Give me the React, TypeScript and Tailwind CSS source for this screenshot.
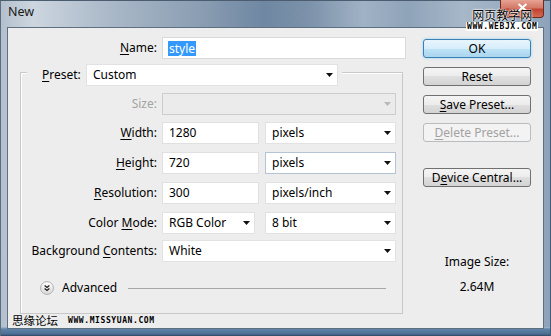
import React from "react";

function Arrow({ disabled }: { disabled?: boolean }) {
  return (
    <svg width="7" height="4" viewBox="0 0 7 4" className="shrink-0">
      <path d="M0 0H7L3.5 4Z" fill={disabled ? "#b8b8b8" : "#111"} />
    </svg>
  );
}

function Select({
  value,
  className = "",
  disabled,
  focus,
}: {
  value?: string;
  className?: string;
  disabled?: boolean;
  focus?: boolean;
}) {
  const cls = disabled
    ? "bg-[#ebebeb] border-[#cdcdcd]"
    : focus
    ? "bg-white border-[#b4c4d4]"
    : "bg-white border-[#e2e2e2]";
  return (
    <div className={`h-[22px] flex items-center justify-between pl-[6px] pr-[4px] border ${cls} ${className}`}>
      <span className="leading-none">{value}</span>
      <Arrow disabled={disabled} />
    </div>
  );
}

function Input({ value, className = "" }: { value: string; className?: string }) {
  return (
    <div className={`h-[22px] flex items-center pl-[6px] bg-white border border-[#e0e0e0] ${className}`}>
      <span className="leading-none">{value}</span>
    </div>
  );
}

function Label({ children, disabled }: { children: React.ReactNode; disabled?: boolean }) {
  return (
    <div className={`w-[136px] shrink-0 text-right leading-none ${disabled ? "text-[#a3a3a3]" : "text-black"}`}>
      {children}
    </div>
  );
}

function U({ children }: { children: React.ReactNode }) {
  return <span className="underline underline-offset-[2px] decoration-1">{children}</span>;
}

function Button({
  children,
  variant = "normal",
  className = "",
}: {
  children: React.ReactNode;
  variant?: "normal" | "default" | "disabled";
  className?: string;
}) {
  const cls =
    variant === "default"
      ? "border-[#3c7fb1] bg-[linear-gradient(#e9f5fc_0%,#d6eefb_50%,#bfe3f6_50%,#a9d6ef_100%)] shadow-[0_0_3px_#8fd0f2] text-black"
      : variant === "disabled"
      ? "border-[#b8bcbf] bg-[#f3f3f3] text-[#a2a2a2]"
      : "border-[#707070] bg-[linear-gradient(#f4f4f4_0%,#ececec_50%,#dfdfdf_50%,#d3d3d3_100%)] text-black";
  return (
    <div
      className={`w-[108px] h-[19px] rounded-[3px] border flex items-center justify-center leading-none ${cls} ${className}`}
    >
      {children}
    </div>
  );
}

function AdvancedIcon() {
  return (
    <svg width="14" height="14" viewBox="0 0 14 14" className="shrink-0">
      <defs>
        <linearGradient id="ag" x1="0" y1="0" x2="0" y2="1">
          <stop offset="0" stopColor="#ffffff" />
          <stop offset="1" stopColor="#d9d9d9" />
        </linearGradient>
      </defs>
      <circle cx="7" cy="7" r="6.4" fill="url(#ag)" stroke="#a8a8a8" strokeWidth="0.9" />
      <path d="M4.6 4.4L7 6.4L9.4 4.4M4.6 7.4L7 9.4L9.4 7.4" fill="none" stroke="#222" strokeWidth="1.3" />
    </svg>
  );
}

export default function App() {
  return (
    <div
      className="relative w-[551px] h-[336px] overflow-hidden pt-0 px-[7px] pb-[8px] flex flex-col font-['Noto_Sans',sans-serif] text-[12px] text-black bg-[linear-gradient(to_bottom,transparent_327px,#a9c0d6_327px,#5f84a8_329px,#4b6f93_334px,#2c4662_336px),linear-gradient(90deg,#b2bfcc_0%,#cdd6df_6%,#aebccb_18%,#8b9eb3_36%,#6f87a2_48%,#7c92aa_56%,#a0b2c5_66%,#8fa3b9_74%,#a6b7c8_84%,#8ea3b9_100%)] shadow-[inset_0_1px_0_#4d5d70,inset_1px_0_0_#5d6d80,inset_-1px_0_0_#3d5a78]"
    >
      {/* Title bar */}
      <div className="h-[27px] shrink-0 flex items-start justify-between">
        <div className="pt-[6px] pl-[1px] text-[12.5px] leading-none text-[#1a1a1a]">New</div>
        <div className="w-[44px] h-[18px] rounded-b-[4px] border border-t-0 border-[#6b2a22] bg-[linear-gradient(#e6a394_0%,#d47a68_45%,#c2432f_55%,#d46a50_100%)] flex items-start justify-center">
          <svg width="11" height="9" viewBox="0 0 11 9" className="mt-[3px]">
            <path d="M1.5 1L9.5 8M9.5 1L1.5 8" stroke="#fff" strokeWidth="2" />
          </svg>
        </div>
      </div>

      {/* Client area */}
      <div className="flex-1 flex border border-[#5e6f82] bg-[#ededed]">
        {/* Left column */}
        <div className="w-[415px] shrink-0 flex flex-col">
          {/* Name */}
          <div className="mt-[9px] flex items-center">
            <div className="w-[149px] text-right leading-none">
              <U>N</U>ame:
            </div>
            <div className="ml-[5px] w-[244px] h-[22px] bg-white border border-[#dadada] flex items-center pl-[5px]">
              <span className="bg-[#3399ff] text-white leading-[15px] px-[1px]">style</span>
            </div>
          </div>

          {/* Group box */}
          <div className="mt-[13px] ml-[12px] w-[383px] h-[242px] border border-[#c9c9c9] shadow-[inset_1px_1px_0_#ffffff] flex flex-col">
            {/* Legend row */}
            <div className="-mt-[9px] ml-[6px] w-[315px] bg-[#ededed] flex items-center">
              <div className="w-[59px] pl-[15px] leading-none">
                <U>P</U>reset:
              </div>
              <Select value="Custom" className="w-[252px]" />
            </div>

            <div className="mt-[7px] flex items-center">
              <Label disabled>Size:</Label>
              <Select disabled className="ml-[5px] w-[234px]" />
            </div>

            <div className="mt-[7px] flex items-center">
              <Label>
                <U>W</U>idth:
              </Label>
              <Input value="1280" className="ml-[5px] w-[97px]" />
              <Select value="pixels" className="ml-[6px] w-[131px]" />
            </div>

            <div className="mt-[8px] flex items-center">
              <Label>
                <U>H</U>eight:
              </Label>
              <Input value="720" className="ml-[5px] w-[97px]" />
              <Select value="pixels" focus className="ml-[6px] w-[131px]" />
            </div>

            <div className="mt-[8px] flex items-center">
              <Label>
                <U>R</U>esolution:
              </Label>
              <Input value="300" className="ml-[5px] w-[97px]" />
              <Select value="pixels/inch" className="ml-[6px] w-[131px]" />
            </div>

            <div className="mt-[8px] flex items-center">
              <Label>
                Color <U>M</U>ode:
              </Label>
              <Select value="RGB Color" className="ml-[5px] w-[93px]" />
              <Select value="8 bit" className="ml-[10px] w-[131px]" />
            </div>

            <div className="mt-[6px] flex items-center">
              <Label>
                Background <U>C</U>ontents:
              </Label>
              <Select value="White" className="ml-[5px] w-[234px]" />
            </div>

            <div className="mt-[15px] h-[22px] flex items-center pl-[19px] pr-[16px]">
              <AdvancedIcon />
              <span className="ml-[8px] leading-none">Advanced</span>
              <div className="ml-[11px] flex-1 h-px bg-[#a6a6a6]" />
            </div>
          </div>

          {/* bottom watermark */}
          <div className="h-[14px] flex items-center pl-[4px]">
            <span className="font-['Noto_Sans_CJK_SC',sans-serif] text-[11.5px] leading-none text-black">思缘论坛</span>
            <span className="ml-[10px] font-['DejaVu_Sans_Mono',monospace] font-bold text-[8px] tracking-[0.6px] leading-none text-black">
              WWW.MISSYUAN.COM
            </span>
          </div>
        </div>

        {/* Right column */}
        <div className="flex-1 flex flex-col">
          <div className="mt-[11px] flex flex-col gap-[9px]">
            <Button variant="default">OK</Button>
            <Button>Reset</Button>
            <Button>
              <U>S</U>ave Preset...
            </Button>
            <Button variant="disabled">
              <U>D</U>elete Preset...
            </Button>
          </div>
          <Button className="mt-[26px]">
            D<U>e</U>vice Central...
          </Button>
          <div className="mt-[67px] w-[108px] text-center leading-[16px]">Image Size:</div>
          <div className="mt-[9px] w-[108px] text-center leading-[16px]">2.64M</div>
        </div>
      </div>

      {/* title watermark overlay */}
      <div className="absolute left-[466px] top-[8px] flex flex-col items-center">
        <span className="font-['Noto_Sans_CJK_SC',sans-serif] text-[12px] leading-[13px] text-black [text-shadow:0_0_2px_#fff,0_0_2px_#fff,0_0_1px_#fff]">
          网页教学网
        </span>
        <span className="mt-[1px] bg-white px-[1px] font-['DejaVu_Sans_Mono',monospace] font-bold text-[8px] tracking-[0.6px] leading-[9px] text-black">
          WWW.WEBJX.COM
        </span>
      </div>
    </div>
  );
}
